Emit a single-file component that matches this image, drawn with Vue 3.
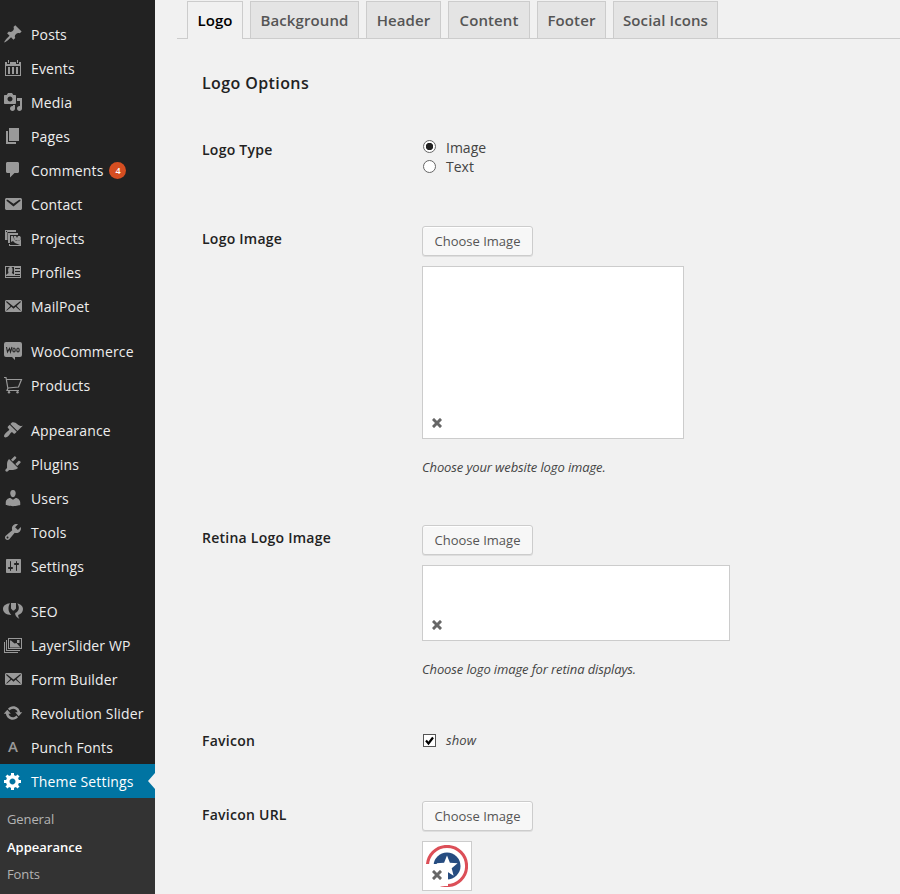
<script setup>
import { ref } from 'vue'

const groups = [
  [
    { label: 'Posts', icon: 'pin' },
    { label: 'Events', icon: 'calendar' },
    { label: 'Media', icon: 'media' },
    { label: 'Pages', icon: 'page' },
    { label: 'Comments', icon: 'comment', count: 4 },
    { label: 'Contact', icon: 'email' },
    { label: 'Projects', icon: 'projects' },
    { label: 'Profiles', icon: 'profiles' },
    { label: 'MailPoet', icon: 'emailAlt' },
  ],
  [
    { label: 'WooCommerce', icon: 'woo' },
    { label: 'Products', icon: 'cart' },
  ],
  [
    { label: 'Appearance', icon: 'brush' },
    { label: 'Plugins', icon: 'plug' },
    { label: 'Users', icon: 'user' },
    { label: 'Tools', icon: 'wrench' },
    { label: 'Settings', icon: 'sliders' },
  ],
  [
    { label: 'SEO', icon: 'seo' },
    { label: 'LayerSlider WP', icon: 'layers' },
    { label: 'Form Builder', icon: 'emailAlt' },
    { label: 'Revolution Slider', icon: 'update' },
    { label: 'Punch Fonts', icon: 'letter' },
    { label: 'Theme Settings', icon: 'gear', current: true },
  ],
]

const paths = {
  pin: 'M10.44 3.02l1.82-1.82 6.36 6.35-1.83 1.82c-1.05-.68-2.48-.57-3.41.36l-.75.75c-.92.93-1.04 2.35-.35 3.41l-1.83 1.82-2.41-2.41-2.8 2.79c-.42.42-3.38 2.71-3.8 2.29s1.86-3.39 2.28-3.81l2.79-2.79L4.1 9.36l1.83-1.82c1.05.69 2.48.57 3.4-.36l.75-.75c.93-.92 1.05-2.35.36-3.41z',
  calendar: 'M2 4h2v2h3V4h6v2h3V4h2v14H2zM3 8v9h14V8zM5 2h1v3H5zM14 2h1v3h-1zM5 9h2v7H5zM9 9h2v7H9zM13 9h2v7h-2z',
  media: 'M13 11V4c0-.55-.45-1-1-1h-1.67L9 1H5L3.67 3H2c-.55 0-1 .45-1 1v7c0 .55.45 1 1 1h10c.55 0 1-.45 1-1zM7 4.5c1.38 0 2.5 1.12 2.5 2.5S8.38 9.5 7 9.5 4.5 8.38 4.5 7 5.62 4.5 7 4.5zM14 6h5v10.5c0 1.38-1.12 2.5-2.5 2.5S14 17.88 14 16.5s1.12-2.5 2.5-2.5c.17 0 .34.02.5.05V9h-3V6zm-4 8.05V13h2v3.5c0 1.38-1.12 2.5-2.5 2.5S7 17.88 7 16.5 8.12 14 9.5 14c.17 0 .34.02.5.05z',
  page: 'M6 15V2h10v13H6zm-1 1h8v2H3V5h2v11z',
  comment: 'M4.500 2h10c.9 0 1.500.6 1.500 1.500v8c0 .9-.6 1.500-1.500 1.500h-3L7 17.500V13H4.500C3.600 13 3 12.400 3 11.500v-8C3 2.600 3.600 2 4.500 2z',
  email: 'M3.87 4h13.25C18.37 4 19 4.59 19 5.79v8.42c0 1.19-.63 1.79-1.88 1.79H3.87c-1.25 0-1.88-.6-1.88-1.79V5.79c0-1.2.63-1.79 1.88-1.79zm6.62 8.6l6.74-5.53c.24-.2.43-.66.13-1.07-.29-.41-.82-.42-1.17-.17l-5.7 3.86L4.8 5.83c-.35-.25-.88-.24-1.17.17-.3.41-.11.87.13 1.07z',
  emailAlt: 'M19 14.5v-9c0-.83-.67-1.5-1.5-1.5H3.49c-.83 0-1.5.67-1.5 1.5v9c0 .83.67 1.5 1.5 1.5H17.5c.83 0 1.5-.67 1.5-1.5zm-1.31-9.11c.33.33.15.67-.03.84L13.6 9.95l3.9 4.06c.12.14.2.36.06.51-.13.16-.43.15-.56.05l-4.37-3.73-2.14 1.95-2.13-1.95-4.37 3.73c-.13.1-.43.11-.56-.05-.14-.15-.06-.37.06-.51l3.9-4.06-4.06-3.72c-.18-.17-.36-.51-.03-.84s.67-.17.95.07l6.24 5.04 6.25-5.04c.28-.24.62-.4.95-.07z',
  projects: 'M2 2h11v2H4.500v8H2zM3 3v1h1V3zM5 5h10v2H7v8H5V9H4V7h1zM8 8h2l1 3 2 2h3l2-2v7H6v-2h1v1h10l-5-2-2-2-2 1zM11 8h2l1 2 1-2h2l1 2-1 2-2 1-3-1-1-2z',
  profiles: 'M2 4h16v12H2zM3 5v8l2.500-2L5 8.500 5.500 6l1.500-1zM8.500 5l1 1.500v2.500l-.7 2L11 12.500V5zM12 6v1h5V6zM12 9v1h5V9zM12 12v1h5v-1zM3 14v1h14v-1z',
  brush: 'M14.48 11.06L7.41 3.99l1.5-1.5c.5-.56 2.3-.47 3.51.32 1.21.8 1.43 1.28 2.91 2.1 1.18.64 2.45 1.26 4.45.85zm-.71.71L6.7 4.7 4.93 6.47c-.39.39-.39 1.02 0 1.41l1.06 1.06c.39.39.39 1.03 0 1.42-.6.6-1.43 1.11-2.21 1.69-.35.26-.7.53-1.01.84C1.43 14.23.4 16.08 1.4 17.07c.99 1 2.84-.03 4.18-1.36.31-.31.58-.66.85-1.02.57-.78 1.08-1.61 1.69-2.21.39-.39 1.02-.39 1.41 0l1.06 1.06c.39.39 1.02.39 1.41 0z',
  plug: 'M13.11 4.36L9.87 7.6 8 5.73l3.24-3.24c.35-.34 1.05-.2 1.56.32.52.51.66 1.21.31 1.55zm-8 1.77l.91-1.12 9.01 9.01-1.19.84c-.71.71-2.63 1.16-3.82 1.16H6.14L4.9 17.26c-.59.59-1.54.59-2.12 0-.59-.58-.59-1.53 0-2.12l1.24-1.24v-3.88c0-1.13.4-3.19 1.09-3.89zm7.26 3.97l3.24-3.24c.34-.35 1.04-.21 1.55.31.52.51.66 1.21.31 1.55l-3.24 3.25z',
  user: 'M10 9.25c-2.27 0-2.73-3.44-2.73-3.44C7 4.02 7.82 2 9.97 2c2.16 0 2.98 2.02 2.71 3.81 0 0-.41 3.44-2.68 3.44zm0 2.57L12.72 10c2.39 0 4.52 2.33 4.52 4.53v2.49s-3.65 1.13-7.24 1.13c-3.65 0-7.24-1.13-7.24-1.13v-2.49c0-2.25 1.94-4.48 4.47-4.48z',
  wrench: 'M16.68 9.77c-1.34 1.34-3.3 1.67-4.95.99l-5.41 6.52c-.99.99-2.59.99-3.58 0s-.99-2.59 0-3.57l6.52-5.42c-.68-1.65-.35-3.61.99-4.95 1.28-1.28 3.12-1.62 4.72-1.06l-2.89 2.89 2.82 2.82 2.86-2.87c.53 1.58.18 3.39-1.08 4.65zM3.81 16.21c.4.39 1.04.39 1.43 0 .4-.4.4-1.04 0-1.43-.39-.4-1.03-.4-1.43 0-.39.39-.39 1.03 0 1.43z',
  sliders: 'M18 16V4c0-.55-.45-1-1-1H4c-.55 0-1 .45-1 1v12c0 .55.45 1 1 1h13c.55 0 1-.45 1-1zM8 11h1c.55 0 1 .45 1 1s-.45 1-1 1H8v1.5c0 .28-.22.5-.5.5s-.5-.22-.5-.5V13H6c-.55 0-1-.45-1-1s.45-1 1-1h1V5.5c0-.28.22-.5.5-.5s.5.22.5.5V11zm5-2h-1c-.55 0-1-.45-1-1s.45-1 1-1h1V5.5c0-.28.22-.5.5-.5s.5.22.5.5V7h1c.55 0 1 .45 1 1s-.45 1-1 1h-1v5.500c0 .28-.22.5-.5.5s-.5-.22-.5-.5V9z',
  seo: 'M7 2.300C3 2.700 0 4.800 0 8c0 3.500 3.200 5.700 8.300 6C6.500 12 5.500 10.300 5.500 7.500c0-2 .6-3.500 1.500-5.200zM8 2h5v5.500L11 9.500H9.800L8 7.500zM14.200 2.400c1.200 1.400 1.600 2.800 1.600 4.600 0 2.500-1.400 4-3.600 5-.3 2.200.8 4 4.300 6-1-1.500-1.400-2.500-1.300-4 3-1 4.800-3 4.800-6 0-3-2.300-5-5.800-5.600z',
  layers: 'M5 3h14v11H5zM6 4v9h12V4zM3 5h1v10h13v1H3zM1 7h1v10h13v1H1zM7 5.500h1l3.500 3 2-.5 4 4.500H7zM14 5h2.500v3H14z',
  update: 'M10.2 3.28c3.53 0 6.43 2.61 6.92 6h2.08l-3.5 4-3.5-4h2.32c-.45-1.97-2.21-3.45-4.32-3.45-1.45 0-2.73.71-3.54 1.78L4.95 5.66C6.23 4.2 8.11 3.28 10.2 3.28zm-.4 13.44c-3.52 0-6.43-2.61-6.92-6H.8l3.5-4c1.17 1.33 2.33 2.67 3.5 4H5.48c.45 1.97 2.21 3.45 4.32 3.45 1.45 0 2.73-.71 3.54-1.78l1.71 1.95c-1.28 1.46-3.15 2.38-5.25 2.38z',
  gear: 'M18 12h-2.18c-.17.7-.44 1.35-.81 1.93l1.54 1.54-2.1 2.1-1.54-1.54c-.58.36-1.23.63-1.91.79V19H8v-2.18c-.68-.16-1.33-.43-1.91-.79l-1.54 1.54-2.12-2.12 1.54-1.54c-.36-.58-.63-1.23-.79-1.91H1V9.03h2.17c.16-.7.44-1.35.8-1.94L2.43 5.55l2.1-2.1 1.54 1.54c.58-.37 1.24-.64 1.93-.81V2h3v2.18c.68.16 1.33.43 1.91.79l1.54-1.54 2.12 2.12-1.54 1.54c.36.59.64 1.24.8 1.94H18V12zm-8.5 1.5c1.66 0 3-1.34 3-3s-1.34-3-3-3-3 1.34-3 3 1.34 3 3 3z',
}

const submenu = ['General', 'Appearance', 'Fonts']
const tabs = [
  { name: 'Logo', width: 56 },
  { name: 'Background', width: 109 },
  { name: 'Header', width: 75 },
  { name: 'Content', width: 82 },
  { name: 'Footer', width: 69 },
  { name: 'Social Icons', width: 105 },
]
const activeTab = ref('Logo')
const logoType = ref('Image')
const showFavicon = ref(true)
</script>

<template>
  <div class="page">
    <aside class="sidebar">
      <ul v-for="(group, g) in groups" :key="g" class="group">
        <li v-for="item in group" :key="item.label" class="item" :class="{ current: item.current }">
          <span v-if="item.icon === 'letter'" class="icon letter">A</span>
          <svg v-else-if="item.icon === 'woo'" class="icon" viewBox="0 0 20 20">
            <path d="M3 1h14a2 2 0 0 1 2 2v11a2 2 0 0 1-2 2h-5v3l-3-3H3a2 2 0 0 1-2-2V3a2 2 0 0 1 2-2z" />
            <path class="cut" d="M3.500 6l1 5 2-3.500 1 3.500L9 6" />
            <ellipse class="cut" cx="11" cy="9" rx="1.200" ry="2" />
            <ellipse class="cut" cx="15" cy="9" rx="1.200" ry="2" />
          </svg>
          <svg v-else-if="item.icon === 'cart'" class="icon" viewBox="0 0 20 20">
            <path class="line" d="M1 2.500h2l1.800 10.500M3.500 4.500h15l-3 7.500L5 13M5 13l-1 2.500H16" />
            <circle cx="6" cy="17.300" r="1.200" /><circle cx="14.500" cy="17.300" r="1.200" />
          </svg>
          <svg v-else class="icon" viewBox="0 0 20 20">
            <path :d="paths[item.icon]" :fill-rule="item.icon === 'seo' ? 'nonzero' : 'evenodd'" />
          </svg>
          <span class="name">{{ item.label }}</span>
          <span v-if="item.count" class="count">{{ item.count }}</span>
        </li>
      </ul>
      <ul class="submenu">
        <li v-for="s in submenu" :key="s" :class="{ on: s === 'Appearance' }">{{ s }}</li>
      </ul>
    </aside>

    <main class="main">
      <nav class="tabs">
        <a
          v-for="t in tabs"
          :key="t.name"
          class="tab"
          :class="{ active: t.name === activeTab }"
          :style="{ width: t.width + 'px' }"
          @click="activeTab = t.name"
        >{{ t.name }}</a>
      </nav>
      <section class="form">
        <h3 class="title">Logo Options</h3>

        <div class="row type">
          <div class="label">Logo Type</div>
          <div class="field radios">
            <label v-for="o in ['Image', 'Text']" :key="o" class="option">
              <input v-model="logoType" class="radio" type="radio" :value="o" />{{ o }}
            </label>
          </div>
        </div>

        <div class="row logo">
          <div class="label">Logo Image</div>
          <div class="field">
            <button class="button">Choose Image</button>
            <div class="preview large">
              <span class="remove"><svg viewBox="0 0 10 10"><path d="M2 2l6 6M8 2l-6 6" /></svg></span>
            </div>
            <p class="hint">Choose your website logo image.</p>
          </div>
        </div>

        <div class="row retina">
          <div class="label">Retina Logo Image</div>
          <div class="field">
            <button class="button">Choose Image</button>
            <div class="preview wide">
              <span class="remove"><svg viewBox="0 0 10 10"><path d="M2 2l6 6M8 2l-6 6" /></svg></span>
            </div>
            <p class="hint">Choose logo image for retina displays.</p>
          </div>
        </div>

        <div class="row favicon">
          <div class="label">Favicon</div>
          <label class="field check">
            <input v-model="showFavicon" class="box" type="checkbox" />
            <svg v-if="showFavicon" class="tick" viewBox="0 0 13 13"><path d="M3 6.500l2.500 3L10 3.500" /></svg>
            <em>show</em>
          </label>
        </div>

        <div class="row">
          <div class="label">Favicon URL</div>
          <div class="field">
            <button class="button">Choose Image</button>
            <div class="preview small">
              <svg class="shield" viewBox="0 0 42 42">
                <circle cx="21" cy="21" r="19.600" fill="none" stroke="#dc4f58" stroke-width="3" />
                <circle cx="21" cy="21" r="13.500" fill="#264c80" />
                <path fill="#fff" d="M21 10.500l2.900 7.200 7.700.5-5.900 5 1.900 7.500-6.600-4.100-6.600 4.100 1.900-7.500-5.900-5 7.700-.5z" />
              </svg>
              <span class="remove"><svg viewBox="0 0 10 10"><path d="M2 2l6 6M8 2l-6 6" /></svg></span>
            </div>
          </div>
        </div>
      </section>
    </main>
  </div>
</template>

<style>
body { background: #f1f1f1; overflow: hidden; }
</style>

<style scoped>
* { box-sizing: border-box; }
.page { display: flex; width: 900px; height: 894px; overflow: hidden; background: #f1f1f1; color: #444; font: 14px/20px "Open Sans", sans-serif; }
ul { list-style: none; margin: 0; padding: 0; }
.sidebar { width: 155px; flex: none; display: flex; flex-direction: column; padding-top: 17px; background: #222; color: #eee; }
.group + .group { margin-top: 11px; }
.item { display: flex; align-items: center; height: 34px; padding-left: 3px; position: relative; white-space: nowrap; }
.icon { width: 20px; height: 20px; flex: none; margin-right: 8px; fill: #999; }
.letter { color: #999; font-weight: 600; font-size: 15px; line-height: 18px; text-align: center; }
.line { fill: none; stroke: #999; stroke-width: 1.2; }
.cut { fill: none; stroke: #222; stroke-width: 1.1; }
.name { padding-top: 1px; letter-spacing: .15px; }
.count { width: 17px; height: 17px; margin-left: 6px; border-radius: 50%; background: #d54e21; color: #fff; font-size: 9px; font-weight: 600; line-height: 17px; text-align: center; }
.current { background: #0074a2; color: #fff; }
.current .icon { fill: #fff; }
.current::after { content: ""; position: absolute; right: 0; top: 9px; border: solid transparent; border-width: 8px 7px 8px 0; border-right-color: #f1f1f1; }
.submenu { flex: 1; padding: 8px 7px; background: #333; color: #b4b4b4; font-size: 13px; line-height: 27.5px; letter-spacing: -.1px; }
.submenu .on { color: #fff; font-weight: 600; letter-spacing: 0; }

.main { flex: 1; min-width: 0; padding: 1px 0 0 22px; }
.tabs { display: flex; gap: 7px; height: 38px; padding-left: 10px; border-bottom: 1px solid #ccc; }
.tab { flex: none; height: 37px; border: 1px solid #ccc; border-bottom: 0; background: #e4e4e4; color: #555; font-size: 15px; font-weight: 550; line-height: 37px; letter-spacing: .1px; text-align: center; white-space: nowrap; }
.tab.active { height: 38px; background: #f1f1f1; color: #000; }
.form { padding-left: 25px; color: #444; }
.title { margin: 0; padding-top: 33px; height: 90px; color: #222; font-size: 16px; line-height: 22px; font-weight: 600; letter-spacing: .4px; }
.row { display: grid; grid-template-columns: 220px 1fr; align-items: start; }
.label { padding-top: 11px; color: #222; font-weight: 550; letter-spacing: .25px; }
.type { height: 89px; }
.logo { height: 299px; }
.retina { height: 203px; }
.favicon { height: 74px; }
.field { padding-top: 7px; }
.logo .field, .retina .field { padding-top: 8px; }
.radios { padding-top: 9px; }
.option { display: flex; align-items: center; gap: 10px; height: 19px; padding-left: 1px; }
.radio { appearance: none; width: 13px; height: 13px; margin: 0; border: 1px solid #666; border-radius: 50%; background: #fff; }
.option:first-child .radio { margin-bottom: 2px; }
.radio:checked { background: radial-gradient(circle, #222 0 3.4px, #fff 4px); }
.check { display: flex; align-items: center; padding: 10px 0 0 1px; position: relative; font-size: 13px; letter-spacing: .1px; }
.box { appearance: none; width: 13px; height: 13px; margin: 0 10px 0 0; border: 1px solid #555; background: #fff; }
.tick { position: absolute; left: 1px; top: 14px; width: 13px; height: 13px; fill: none; stroke: #000; stroke-width: 2.2; }
.button { display: block; width: 111px; height: 30px; padding: 0; border: 1px solid #ccc; border-radius: 3px; background: #f7f7f7; box-shadow: inset 0 1px 0 #fff, 0 1px 0 rgba(0, 0, 0, .08); color: #555; font: 13px/28px "Open Sans", sans-serif; }
.preview { position: relative; margin-top: 10px; border: 1px solid #ccc; background: #fff; }
.large { width: 262px; height: 173px; }
.wide { width: 308px; height: 76px; }
.small { width: 50px; height: 50px; padding: 3px; }
.shield { display: block; width: 42px; height: 42px; filter: blur(.6px); }
.remove { position: absolute; left: 3px; bottom: 4px; width: 22px; height: 22px; padding: 6px; background: #fff; }
.remove svg { display: block; width: 10px; height: 10px; fill: none; stroke: #666; stroke-width: 3; stroke-linecap: square; }
.hint { margin: 18px 0 0; font-size: 13px; font-style: italic; letter-spacing: -.12px; }
</style>
